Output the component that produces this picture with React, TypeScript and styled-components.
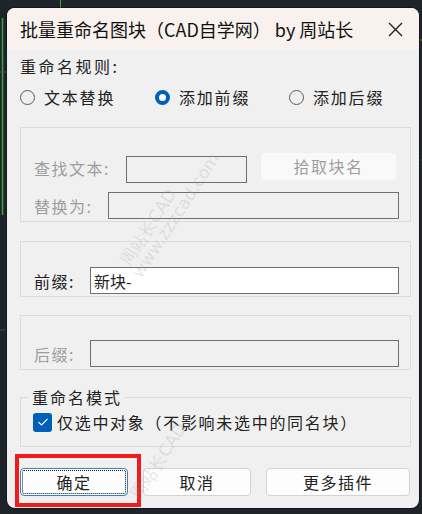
import React, { useState } from 'react';
import styled, { createGlobalStyle } from 'styled-components';

const GlobalStyle = createGlobalStyle`
  html, body {
    margin: 0;
    padding: 0;
    background: #1f232a;
  }
  body {
    font-family: "Noto Sans CJK SC", "Noto Sans", sans-serif;
  }
`;

const Desktop = styled.div`
  position: relative;
  width: 422px;
  height: 514px;
  overflow: hidden;
  background: #1f232a;
  padding: 8px 3px 0 7px;
  box-sizing: border-box;
`;

const CanvasLines = styled.svg`
  position: absolute;
  inset: 0;
  pointer-events: none;
`;

const Dialog = styled.div`
  position: relative;
  width: 412px;
  height: 500px;
  border-radius: 8px;
  background: #f0f0f0;
  overflow: hidden;
  display: flex;
  flex-direction: column;
  box-shadow: 0 0 0 1px rgba(0, 0, 0, 0.4);
`;

const TitleBar = styled.div`
  height: 42px;
  flex: none;
  background: #f8f1ed;
  display: flex;
  align-items: center;
  justify-content: space-between;
  padding: 0 16px 0 13px;
  font-size: 18px;
  color: #111;
`;

const CloseIcon = styled.svg`
  width: 15px;
  height: 15px;
`;

const Body = styled.div`
  flex: 1;
  display: flex;
  flex-direction: column;
  padding: 5px 8px 0 13px;
  font-size: 16px;
  color: #222;
`;

const SectionLabel = styled.div`
  height: 22px;
  line-height: 22px;
  letter-spacing: 2.5px;
`;

const RadioRow = styled.div`
  display: flex;
  margin-top: 9px;
  height: 22px;
`;

const RadioItem = styled.label<{ $w: number }>`
  display: flex;
  align-items: center;
  width: ${(p) => p.$w}px;
  gap: 9px;
  letter-spacing: 1.8px;
  cursor: pointer;
`;

const RadioDot = styled.span<{ $on: boolean }>`
  width: 15px;
  height: 15px;
  box-sizing: border-box;
  border-radius: 50%;
  flex: none;
  background: ${(p) => (p.$on ? '#fff' : 'transparent')};
  border: ${(p) => (p.$on ? '4.5px solid #005fb8' : '1px solid #5a5a5a')};
`;

const GroupBox = styled.div<{ $h: number; $top: number }>`
  margin-top: ${(p) => p.$top}px;
  height: ${(p) => p.$h}px;
  box-sizing: border-box;
  border: 1px solid #dcdcdc;
  display: flex;
  flex-direction: column;
  justify-content: flex-end;
  gap: 11px;
  padding: 0 11px 2px 13px;
`;

const FieldRow = styled.div`
  display: flex;
  align-items: center;
  height: 27px;
`;

const FieldLabel = styled.span<{ $w: number; $dim?: boolean }>`
  width: ${(p) => p.$w}px;
  flex: none;
  letter-spacing: 1.5px;
  color: ${(p) => (p.$dim ? '#9e9e9e' : '#222')};
`;

const TextBox = styled.input<{ $w?: number }>`
  box-sizing: border-box;
  height: 27px;
  width: ${(p) => (p.$w ? `${p.$w}px` : 'auto')};
  flex: ${(p) => (p.$w ? 'none' : '1')};
  border: 1px solid #6f6f6f;
  background: ${(p) => (p.disabled ? '#f0f0f0' : '#fff')};
  font-family: "Noto Sans CJK SC", sans-serif;
  font-size: 16px;
  color: #222;
  padding: 0 3px;
  outline: none;
`;

const PickButton = styled.button`
  margin-left: 14px;
  margin-top: -3px;
  width: 135px;
  height: 27px;
  border: none;
  border-radius: 3px;
  background: #f9f9f9;
  color: #9e9e9e;
  font-family: "Noto Sans CJK SC", sans-serif;
  font-size: 16px;
  letter-spacing: 1.5px;
`;

const ModeBox = styled.fieldset`
  margin: 18px 0 0 0;
  padding: 0 0 6px 12px;
  height: 59px;
  box-sizing: border-box;
  border: 1px solid #dcdcdc;
  min-width: 0;
`;

const ModeLegend = styled.legend`
  padding: 0 3px;
  margin-left: -4px;
  letter-spacing: 2px;
  color: #222;
  line-height: 18px;
`;

const CheckRow = styled.label`
  display: flex;
  align-items: center;
  gap: 5px;
  margin-top: 4px;
  letter-spacing: 1.7px;
`;

const CheckBox = styled.span`
  width: 19px;
  height: 19px;
  border-radius: 3px;
  background: #005fb8;
  display: flex;
  align-items: center;
  justify-content: center;
  flex: none;
`;

const ButtonRow = styled.div`
  display: flex;
  gap: 15px;
  margin-top: 21px;
`;

const ActionButton = styled.button<{ $w: number; $focus?: boolean }>`
  position: relative;
  width: ${(p) => p.$w}px;
  height: 28px;
  box-sizing: border-box;
  background: #fdfdfd;
  border: 1px solid ${(p) => (p.$focus ? '#3c7fc6' : '#d3d3d3')};
  border-radius: 4px;
  font-family: "Noto Sans CJK SC", sans-serif;
  font-size: 16px;
  letter-spacing: 1.5px;
  color: #222;
  outline: ${(p) => (p.$focus ? '1px dotted #111' : 'none')};
  outline-offset: -3px;
`;

const Highlight = styled.span`
  position: absolute;
  left: -6px;
  top: -15px;
  width: 126px;
  height: 53px;
  box-sizing: border-box;
  border: 4px solid #ee1c1c;
  pointer-events: none;
`;

const Watermark = styled.div<{ $x: number; $y: number }>`
  position: absolute;
  left: ${(p) => p.$x}px;
  top: ${(p) => p.$y}px;
  transform: rotate(-57deg);
  transform-origin: left top;
  font-family: "DejaVu Sans", sans-serif;
  font-size: 17px;
  line-height: 22px;
  color: rgba(160, 160, 160, 0.25);
  white-space: nowrap;
  pointer-events: none;
`;

export default function App() {
  const [rule, setRule] = useState(1);
  const rules = [
    { label: '文本替换', w: 135 },
    { label: '添加前缀', w: 134 },
    { label: '添加后缀', w: 120 },
  ];

  return (
    <>
      <GlobalStyle />
      <Desktop>
        <CanvasLines width="422" height="514">
          <line x1="2.5" y1="18" x2="2.5" y2="215" stroke="#3fa33f" strokeWidth="1.5" />
          <line x1="60.5" y1="0" x2="60.5" y2="9" stroke="#3fa33f" strokeWidth="1" />
          <line x1="420" y1="40" x2="422" y2="40" stroke="#3fa33f" strokeWidth="1" />
          <line x1="0" y1="72" x2="6" y2="72" stroke="#555" />
          <line x1="0" y1="330" x2="6" y2="330" stroke="#444" />
          <line x1="419" y1="160" x2="422" y2="160" stroke="#444" />
        </CanvasLines>
        <Dialog>
          <TitleBar>
            <span>批量重命名图块（CAD自学网） by 周站长</span>
            <CloseIcon viewBox="0 0 15 15">
              <path d="M1 1 L14 14 M14 1 L1 14" stroke="#222" strokeWidth="1.4" fill="none" />
            </CloseIcon>
          </TitleBar>
          <Body>
            <SectionLabel>重命名规则:</SectionLabel>
            <RadioRow>
              {rules.map((r, i) => (
                <RadioItem key={r.label} $w={r.w} onClick={() => setRule(i)}>
                  <RadioDot $on={rule === i} />
                  {r.label}
                </RadioItem>
              ))}
            </RadioRow>

            <GroupBox $top={19} $h={95}>
              <FieldRow>
                <FieldLabel $w={92} $dim>查找文本:</FieldLabel>
                <TextBox disabled $w={121} style={{ marginTop: 4 }} />
                <PickButton disabled>拾取块名</PickButton>
              </FieldRow>
              <FieldRow>
                <FieldLabel $w={74} $dim>替换为:</FieldLabel>
                <TextBox disabled />
              </FieldRow>
            </GroupBox>

            <GroupBox $top={19} $h={56}>
              <FieldRow>
                <FieldLabel $w={56}>前缀:</FieldLabel>
                <TextBox defaultValue="新块-" />
              </FieldRow>
            </GroupBox>

            <GroupBox $top={18} $h={55}>
              <FieldRow>
                <FieldLabel $w={56} $dim>后缀:</FieldLabel>
                <TextBox disabled />
              </FieldRow>
            </GroupBox>

            <ModeBox>
              <ModeLegend>重命名模式</ModeLegend>
              <CheckRow>
                <CheckBox>
                  <svg width="12" height="10" viewBox="0 0 12 10">
                    <path d="M1.5 5.2 L4.6 8 L10.5 1.8" stroke="#fff" strokeWidth="1.2" fill="none" />
                  </svg>
                </CheckBox>
                仅选中对象（不影响未选中的同名块）
              </CheckRow>
            </ModeBox>

            <ButtonRow>
              <ActionButton $w={108} $focus>
                确定
                <Highlight />
              </ActionButton>
              <ActionButton $w={108}>取消</ActionButton>
              <ActionButton $w={144}>更多插件</ActionButton>
            </ButtonRow>
          </Body>
          <Watermark $x={108} $y={250}>周站长CAD</Watermark>
          <Watermark $x={120} $y={262}>www.zzzcad.com</Watermark>
          <Watermark $x={118} $y={484}>周站长CAD</Watermark>
        </Dialog>
      </Desktop>
    </>
  );
}
